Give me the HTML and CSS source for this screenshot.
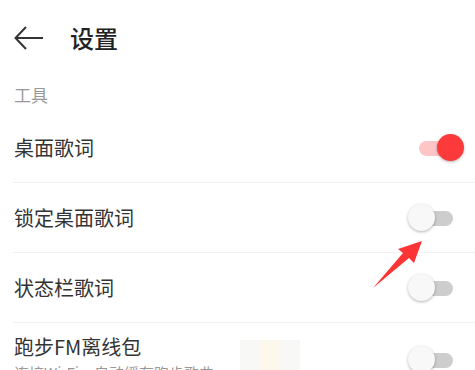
FILE: index.html
```html
<!DOCTYPE html>
<html lang="zh-CN">
<head>
  <meta charset="UTF-8">
  <title>设置</title>
  <link rel="stylesheet" href="styles.css">
</head>
<body>

  <div class="page">
    <div class="header">
      <svg class="back" width="30" height="24" viewBox="0 0 30 24">
        <path d="M29 12H2M12 1L1.5 12 12 23" fill="none" stroke="#333" stroke-width="2"/>
      </svg>
      <h1>设置</h1>
    </div>

    <div class="section">工具</div>

    <div class="row">
      <span class="label">桌面歌词</span>
      <div class="switch on"><i class="track"></i><i class="knob"></i></div>
    </div>
    <div class="row">
      <span class="label">锁定桌面歌词</span>
      <div class="switch"><i class="track"></i><i class="knob"></i></div>
    </div>
    <div class="row">
      <span class="label">状态栏歌词</span>
      <div class="switch"><i class="track"></i><i class="knob"></i></div>
    </div>
    <div class="row tall">
      <div>
        <div class="label">跑步FM离线包</div>
        <div class="sub">连接Wi-Fi，自动缓存跑步歌曲</div>
      </div>
      <div class="switch"><i class="track"></i><i class="knob"></i></div>
    </div>

    <!-- red pointer pasted over the screenshot -->
    <svg class="pointer" width="475" height="370" viewBox="0 0 475 370">
      <polygon points="422,241 398,249 403,253 373,288 409,258 414,263" fill="#fb3535"/>
    </svg>
    <div class="smudge"></div>
  </div>

</body>
</html>
```

FILE: styles.css
```css
body {
  margin: 0;
  background: #fff;
  font-family: "Noto Sans CJK SC", "Noto Sans", sans-serif;
  color: #333;
}

.page {
  position: relative;
  width: 475px;
  height: 370px;
  overflow: hidden;
}

.header {
  display: flex;
  align-items: center;
  height: 75px;
  padding-left: 14px;
  box-sizing: border-box;
}

.back {
  margin-right: 26px;
}

.header h1 {
  margin: 0;
  font-size: 24px;
  font-weight: 500;
  color: #222;
}

.section {
  height: 38px;
  line-height: 40px;
  padding-left: 14px;
  font-size: 17px;
  color: #999;
}

.row {
  display: flex;
  align-items: center;
  justify-content: space-between;
  height: 69px;
  margin-left: 13px;
  padding: 0 11px 0 1px;
  border-bottom: 1px solid #f2f2f2;
}

.row.tall {
  border-bottom: none;
}

.label {
  font-size: 20px;
  color: #333;
}

.tall .label {
  line-height: 30px;
  margin-top: 1px;
}

.sub {
  font-size: 15px;
  color: #999;
  line-height: 22px;
}

.tall .switch {
  margin-top: 4px;
}

.switch {
  position: relative;
  width: 56px;
  height: 28px;
}

.switch .track {
  position: absolute;
  left: 11px;
  top: 7px;
  width: 34px;
  height: 15px;
  border-radius: 8px;
  background: #cdcdcd;
}

.switch .knob {
  position: absolute;
  left: 0;
  top: 0;
  width: 27px;
  height: 27px;
  border-radius: 50%;
  background: #f8f8f8;
  box-shadow: 0 1px 3px rgba(0, 0, 0, 0.3);
}

.switch.on .track {
  background: #fdc5c5;
}

.switch.on .knob {
  left: 29px;
  background: #fc3a3c;
}

.pointer {
  position: absolute;
  left: 0;
  top: 0;
}

.smudge {
  position: absolute;
  left: 240px;
  top: 340px;
  width: 60px;
  height: 30px;
  background: linear-gradient(90deg, #f6f6f4 0, #f6f6f4 20px, #fbf6e6 20px, #fbf6e6 40px, #f6f6f4 40px);
  opacity: 0.8;
}
```
